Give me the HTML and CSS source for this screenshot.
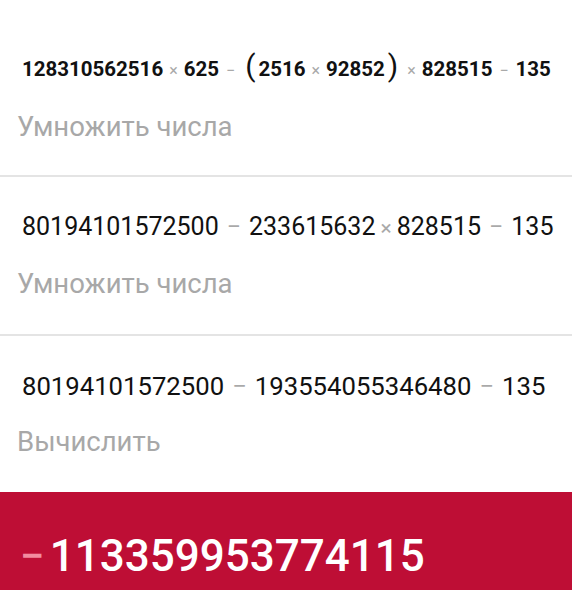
FILE: index.html
```html
<!DOCTYPE html>
<html lang="ru">
<head>
    <meta charset="UTF-8">
    <meta name="viewport" content="width=device-width, initial-scale=1.0">
    <title>Решение</title>
    <link rel="stylesheet" href="styles.css">
</head>
<body>
    <div class="steps">
        <div class="step step-first">
            <div class="expr expr-bold">128310562516<span class="op op-mul">×</span>625<span class="op">−</span><span class="paren">(</span>2516<span class="op op-mul">×</span>92852<span class="paren">)</span><span class="op op-mul">×</span>828515<span class="op">−</span>135</div>
            <div class="hint">Умножить числа</div>
        </div>
        <div class="step">
            <div class="expr">80194101572500<span class="op">−</span>233615632<span class="op op-mul">×</span>828515<span class="op">−</span>135</div>
            <div class="hint">Умножить числа</div>
        </div>
        <div class="step step-last">
            <div class="expr expr-wide">80194101572500<span class="op">−</span>193554055346480<span class="op">−</span>135</div>
            <div class="hint">Вычислить</div>
        </div>
    </div>
    <div class="result"><span class="sign">−</span>113359953774115</div>
</body>
</html>
```

FILE: styles.css
```css
body {
    margin: 0;
    font-family: Roboto, "Noto Sans", sans-serif;
    background: #fff;
    color: #111;
    overflow: hidden;
}
.step {
    padding: 32px 20px 32px 20px;
    border-bottom: 2px solid #e4e4e4;
}
.step-first {
    padding-top: 51px;
    padding-bottom: 30px;
}
.step-last {
    border-bottom: none;
}
.expr {
    font-size: 25px;
    line-height: 36px;
    white-space: nowrap;
    padding-left: 2px;
}
.expr-wide {
    font-size: 25.7px;
}
.expr-bold {
    font-size: 20.5px;
    font-weight: 700;
}
.op {
    color: #a9a9a9;
    font-weight: 400;
    margin: 0 8px;
}
.op-mul {
    font-size: 21px;
    margin: 0 5px;
}
.expr-bold .op {
    font-size: 16px;
    margin: 0 7px;
}
.expr-bold .op-mul {
    margin: 0 6px;
}
.paren {
    font-size: 30px;
    font-weight: 400;
    line-height: 0;
    margin: 0 3px;
}
.hint {
    margin-top: 20px;
    font-size: 27.5px;
    line-height: 36px;
    color: #a8a8a8;
    margin-left: -3px;
}
.result {
    background: #be0e35;
    color: #fff;
    font-size: 44px;
    font-weight: 500;
    line-height: 60px;
    padding: 34px 20px 20px;
    white-space: nowrap;
}
.sign {
    color: #f28ca0;
    margin-right: 5px;
}
```
